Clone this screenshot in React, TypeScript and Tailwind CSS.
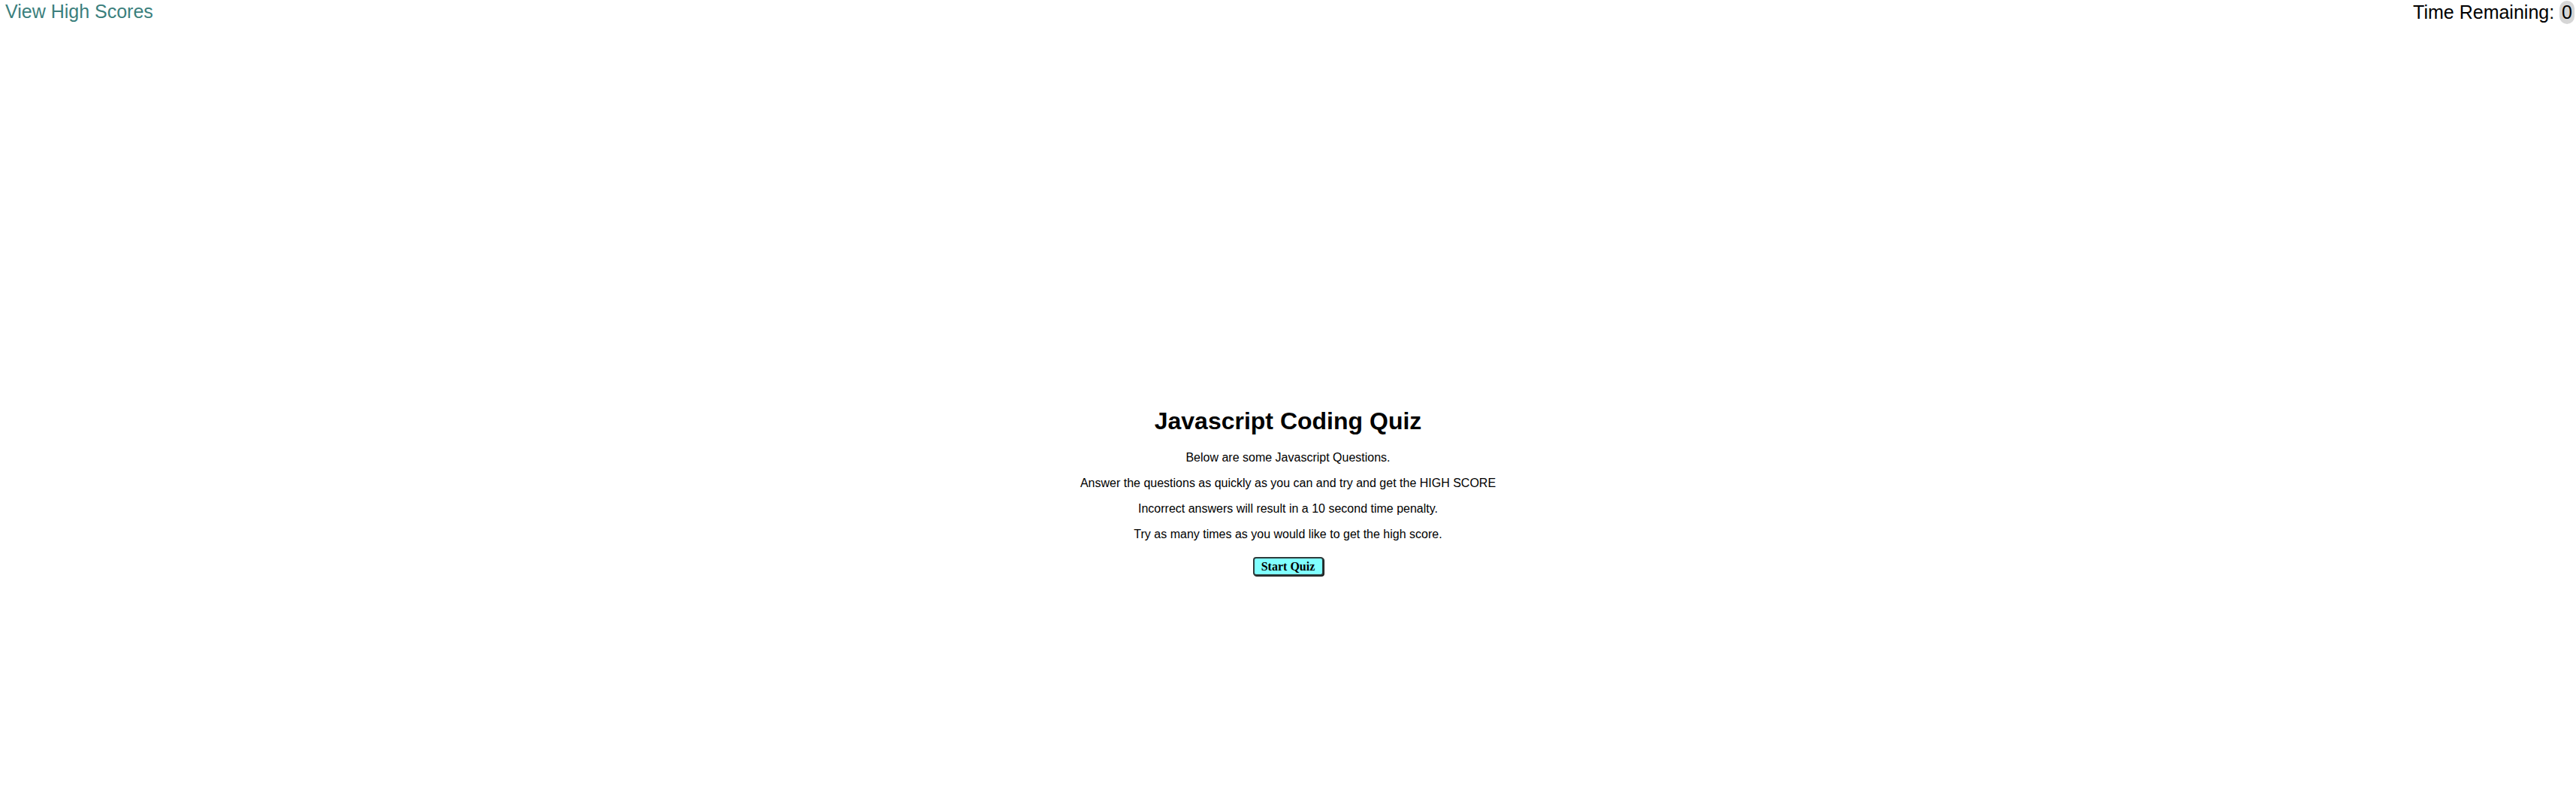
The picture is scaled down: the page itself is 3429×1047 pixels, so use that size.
export default function App() {
  return (
    <div className="min-h-screen bg-white font-['Liberation_Sans',Arial,sans-serif] text-black">
      {/* Top bar */}
      <header className="flex items-start justify-between pl-[7px] pr-[2px] pt-[1px] text-[25px] leading-[29px]">
        <a href="#" className="text-[#3b7f7d]">
          View High Scores
        </a>
        <div className="flex items-center">
          <span>Time Remaining:&nbsp;</span>
          <span className="flex h-[31px] items-center rounded-full bg-[#d6d6d6] px-[3px]">0</span>
        </div>
      </header>

      {/* Intro */}
      <main className="mt-[510px] flex flex-col items-center text-center">
        <h1 className="mb-[21px] text-[32px] font-bold leading-[37px]">Javascript Coding Quiz</h1>
        <p className="mb-4 text-[16px] leading-[18px]">Below are some Javascript Questions.</p>
        <p className="mb-4 text-[16px] leading-[18px]">
          Answer the questions as quickly as you can and try and get the HIGH SCORE
        </p>
        <p className="mb-4 text-[16px] leading-[18px]">
          Incorrect answers will result in a 10 second time penalty.
        </p>
        <p className="mb-4 text-[16px] leading-[18px]">
          Try as many times as you would like to get the high score.
        </p>
        <button className="mt-[5px] h-[25px] w-[94px] rounded-[4px] border-2 border-[#2f3b3b] bg-[#80ffff] font-['Liberation_Serif',Georgia,serif] text-[16px] font-bold leading-[20px] shadow-[1px_1px_0_#111]">
          Start Quiz
        </button>
      </main>
    </div>
  )
}
